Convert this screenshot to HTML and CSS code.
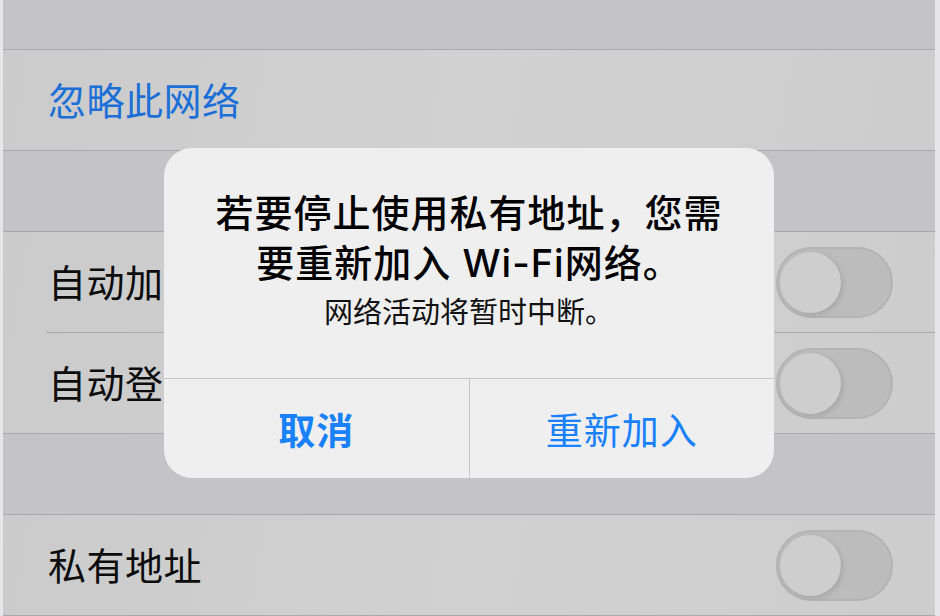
FILE: index.html
```html
<!DOCTYPE html>
<html lang="zh-CN">
<head>
    <meta charset="UTF-8">
    <meta name="viewport" content="width=device-width, initial-scale=1.0">
    <title>无线局域网</title>
    <link rel="stylesheet" href="styles.css">
</head>
<body>

    <div class="screen">
        <div class="gap gap-top"></div>

        <!-- 忽略网络 -->
        <div class="group">
            <div class="row">
                <span class="label link">忽略此网络</span>
            </div>
        </div>

        <div class="gap"></div>

        <!-- 自动选项 -->
        <div class="group">
            <div class="row inset">
                <span class="label">自动加入</span>
                <div class="switch"><div class="knob"></div></div>
            </div>
            <div class="row">
                <span class="label">自动登录</span>
                <div class="switch"><div class="knob"></div></div>
            </div>
        </div>

        <div class="gap"></div>

        <div class="group">
            <div class="row inset">
                <span class="label">私有地址</span>
                <div class="switch"><div class="knob"></div></div>
            </div>
        </div>

        <!-- 弹窗 -->
        <div class="alert">
            <div class="alert-body">
                <p class="alert-title">若要停止使用私有地址，您需要重新加入 Wi-Fi网络。</p>
                <p class="alert-msg">网络活动将暂时中断。</p>
            </div>
            <div class="alert-actions">
                <div class="action bold">取消</div>
                <div class="action">重新加入</div>
            </div>
        </div>
    </div>

</body>
</html>
```

FILE: styles.css
```css
html, body {
    margin: 0;
    padding: 0;
}

body {
    width: 940px;
    height: 616px;
    overflow: hidden;
    background-color: #e6e6e8;
    font-family: Inter, "Noto Sans CJK SC", sans-serif;
}

.screen {
    position: relative;
    margin-left: 3px;
    width: 932px;
    height: 616px;
    background-color: #c4c4c8;
}

.gap {
    height: 80px;
    border-bottom: 1px solid #a9a9ad;
}

.gap-top {
    height: 49px;
}

.group {
    background: linear-gradient(100deg, #cbcbcc, #d1d1d2 50%, #cdcdce);
    border-bottom: 1px solid #a9a9ad;
}

.row {
    height: 100px;
    display: flex;
    align-items: center;
    justify-content: space-between;
    padding: 0 42px 0 45px;
    position: relative;
}

.row.inset::after {
    content: "";
    position: absolute;
    left: 43px;
    right: 0;
    bottom: -1px;
    height: 1px;
    background-color: #a9a9ad;
}

.group .row.inset {
    margin-bottom: 1px;
}

.group .row.inset:last-child {
    margin-bottom: 0;
}

.label {
    font-size: 38px;
    color: #0c0c0c;
    letter-spacing: 0.5px;
    position: relative;
    top: -2px;
}

.link {
    color: #1b6fd6;
}

.switch {
    width: 111px;
    height: 67px;
    border-radius: 36px;
    background-color: #bcbcbd;
    border: 2px solid #b3b3b4;
    display: flex;
    align-items: center;
    padding-left: 2px;
}

.knob {
    width: 61px;
    height: 61px;
    border-radius: 50%;
    background-color: #cecece;
    box-shadow: 2px 2px 5px rgba(0, 0, 0, 0.12);
}

.alert {
    position: absolute;
    left: 161px;
    top: 148px;
    width: 610px;
    height: 330px;
    border-radius: 28px;
    background-color: #efeff0;
    overflow: hidden;
    display: flex;
    flex-direction: column;
}

.alert-body {
    height: 230px;
    box-sizing: border-box;
    padding: 40px 40px 0;
    text-align: center;
}

.alert-title {
    margin: 0;
    font-size: 38px;
    line-height: 50px;
    font-weight: 500;
    letter-spacing: 1px;
    color: #000;
}

.alert-msg {
    margin: 6px 0 0;
    font-size: 29px;
    line-height: 38px;
    color: #111;
    letter-spacing: 0;
}

.alert-actions {
    flex: 1;
    display: flex;
    border-top: 1px solid #c7c7c9;
}

.action {
    flex: 1;
    display: flex;
    align-items: center;
    justify-content: center;
    font-size: 37px;
    color: #1881fb;
    letter-spacing: 1px;
}

.action + .action {
    border-left: 1px solid #c7c7c9;
}

.bold {
    font-weight: 600;
}
```
